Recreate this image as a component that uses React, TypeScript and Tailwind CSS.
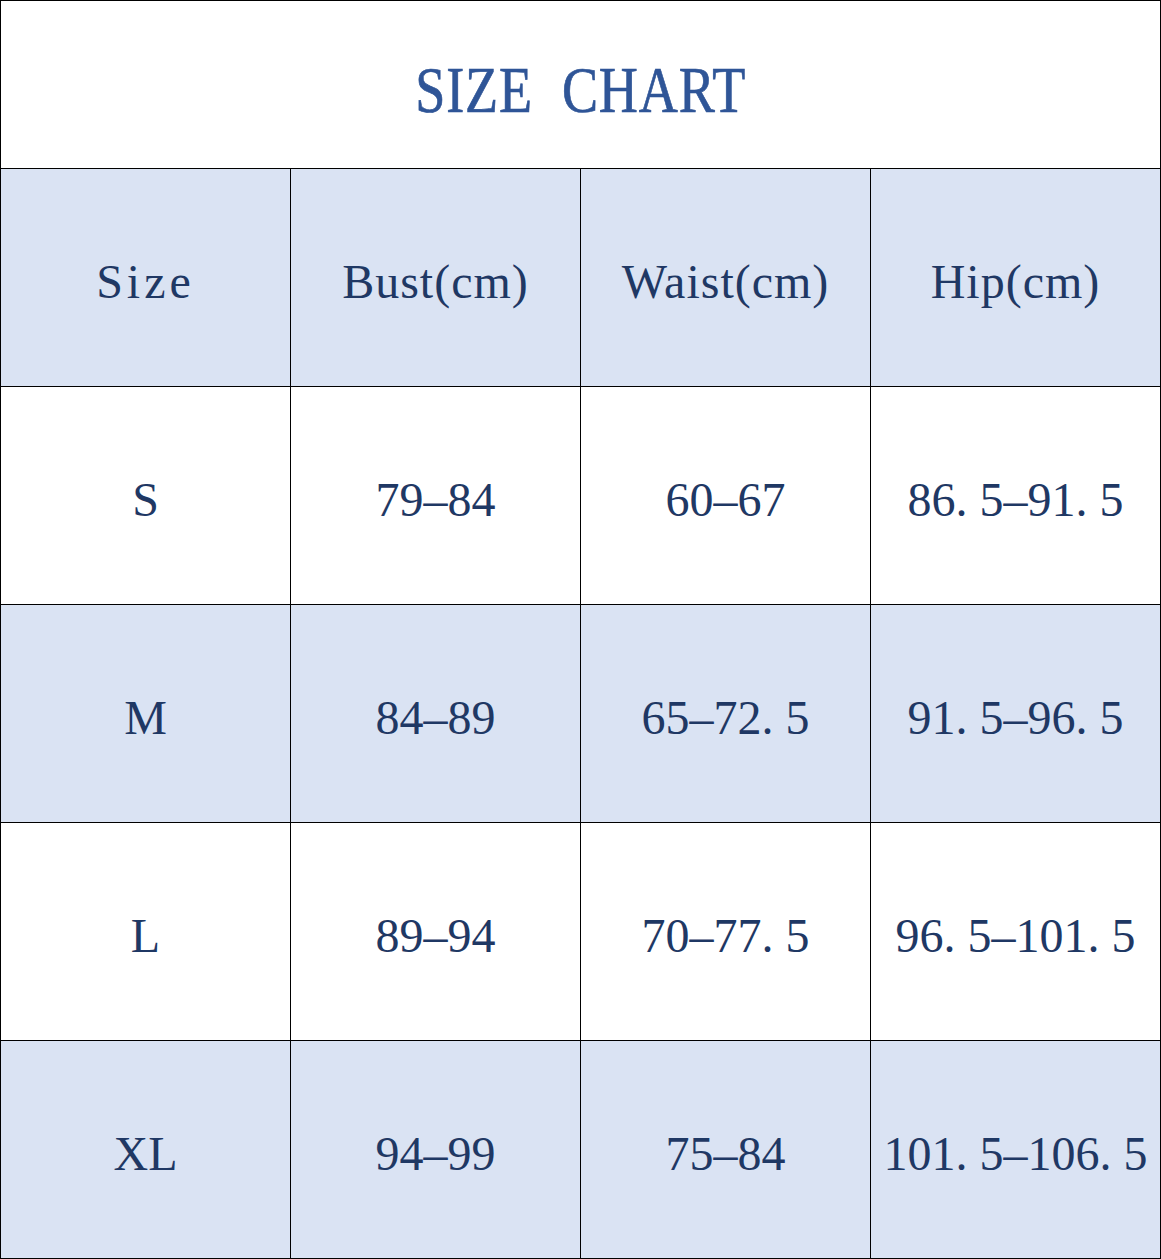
import React from "react";

const rows = [
  ["S", "79–84", "60–67", "86. 5–91. 5"],
  ["M", "84–89", "65–72. 5", "91. 5–96. 5"],
  ["L", "89–94", "70–77. 5", "96. 5–101. 5"],
  ["XL", "94–99", "75–84", "101. 5–106. 5"],
];

const header = ["Size", "Bust(cm)", "Waist(cm)", "Hip(cm)"];

const Cell = ({ text, last, bottom, blue, head }: { text: string; last: boolean; bottom: boolean; blue: boolean; head: boolean }) => (
  <div
    className={`flex items-center justify-center pt-2 text-[48px] text-[#1f3864] ${blue ? "bg-[#dae3f3]" : "bg-white"} ${last ? "" : "border-r border-black"} ${bottom ? "" : "border-b border-black"}`}
  >
    <span className={text === "Size" ? "tracking-[4px]" : head ? "tracking-[1px]" : "tracking-normal"}>{text}</span>
  </div>
);

export default function App() {
  const all = [header, ...rows];
  return (
    <div
      className="w-[1161px] h-[1259px] border border-black bg-white flex flex-col"
      style={{ fontFamily: '"Liberation Serif", "Noto Sans CJK SC", serif' }}
    >
      <div className="h-[168px] shrink-0 border-b border-black flex items-center justify-center pt-[10px]">
        <span className="inline-block scale-x-[0.82] text-[66px] tracking-[1px] [word-spacing:18px] text-[#2f5597] [-webkit-text-stroke:0.7px_#2f5597]">
          SIZE CHART
        </span>
      </div>
      <div className="grid grid-cols-[290px_290px_290px_289px] grid-rows-[218px_218px_218px_218px_217px] leading-none">
        {all.map((r, ri) =>
          r.map((t, ci) => (
            <Cell
              key={`${ri}-${ci}`}
              text={t}
              head={ri === 0}
              last={ci === 3}
              bottom={ri === all.length - 1}
              blue={ri % 2 === 0}
            />
          ))
        )}
      </div>
    </div>
  );
}
